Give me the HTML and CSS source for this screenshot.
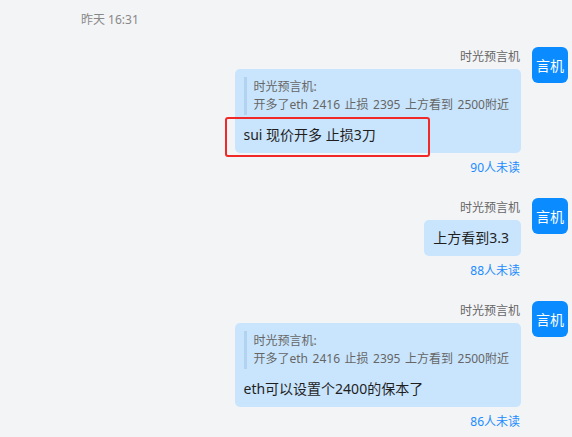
FILE: index.html
```html
<!DOCTYPE html>
<html lang="zh-CN">
<head>
  <meta charset="UTF-8">
  <meta name="viewport" content="width=device-width, initial-scale=1.0">
  <title>群聊</title>
  <link rel="stylesheet" href="styles.css">
</head>
<body>
  <div class="chat">
    <div class="time">昨天 16:31</div>

    <div class="msg">
      <div class="msg-body">
        <div class="name">时光预言机</div>
        <div class="bubble">
          <div class="quote">
            <div>时光预言机:</div>
            <div>开多了eth 2416 止损 2395 上方看到 2500附近</div>
          </div>
          <div class="text">sui 现价开多 止损3刀</div>
          <div class="mark"></div>
        </div>
        <div class="unread">90人未读</div>
      </div>
      <div class="avatar">言机</div>
    </div>

    <div class="msg">
      <div class="msg-body">
        <div class="name">时光预言机</div>
        <div class="bubble">
          <div class="text">上方看到3.3</div>
        </div>
        <div class="unread">88人未读</div>
      </div>
      <div class="avatar">言机</div>
    </div>

    <div class="msg">
      <div class="msg-body">
        <div class="name">时光预言机</div>
        <div class="bubble">
          <div class="quote">
            <div>时光预言机:</div>
            <div>开多了eth 2416 止损 2395 上方看到 2500附近</div>
          </div>
          <div class="text">eth可以设置个2400的保本了</div>
        </div>
        <div class="unread">86人未读</div>
      </div>
      <div class="avatar">言机</div>
    </div>
  </div>
</body>
</html>
```

FILE: styles.css
```css
html, body {
  margin: 0;
  height: 100%;
}
body {
  font-family: "Noto Sans", "Noto Sans CJK SC", sans-serif;
  background: #f3f4f6;
  color: #1f1f1f;
  overflow: hidden;
}
.chat {
  padding: 12px 4px 0 0;
}
.time {
  font-size: 12px;
  line-height: 16px;
  color: #888;
  margin-left: 81px;
  margin-bottom: 19px;
}
.msg {
  display: flex;
  justify-content: flex-end;
  gap: 11px;
  margin-bottom: 22px;
}
.msg-body {
  display: flex;
  flex-direction: column;
  align-items: flex-end;
  padding-top: 2px;
}
.name {
  font-size: 12px;
  line-height: 16px;
  color: #666;
  margin-right: 1px;
  margin-bottom: 4px;
}
.bubble {
  position: relative;
  background: #c9e5fd;
  border-radius: 5px;
  padding: 8px 12px 8px 9px;
}
.quote {
  border-left: 3px solid #b2d3ef;
  padding: 1px 0 1px 7px;
  margin-bottom: 10px;
  font-size: 12px;
  line-height: 18px;
  color: #666;
  word-spacing: 1.4px;
  white-space: nowrap;
}
.text {
  font-size: 14px;
  line-height: 20px;
  white-space: nowrap;
}
.mark {
  position: absolute;
  left: -10px;
  top: 48px;
  width: 201px;
  height: 36px;
  border: 2px solid #f02828;
  border-radius: 3px;
}
.unread {
  font-size: 12px;
  line-height: 16px;
  color: #1a8cff;
  margin-top: 7px;
  margin-right: 1px;
}
.avatar {
  width: 36px;
  height: 36px;
  flex-shrink: 0;
  border-radius: 6px;
  background: #0a8bff;
  color: #fff;
  font-size: 14px;
  display: flex;
  align-items: center;
  justify-content: center;
}
```
